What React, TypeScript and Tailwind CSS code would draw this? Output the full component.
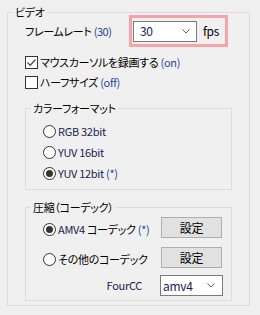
import React from 'react';

const Check = ({ checked }: { checked?: boolean }) => (
  <span className="flex h-[13px] w-[13px] shrink-0 items-center justify-center border border-[#333333] bg-white">
    {checked && (
      <svg width="11" height="11" viewBox="0 0 11 11">
        <path d="M1.5 5.5 L4.2 8.2 L9.5 2.5" fill="none" stroke="#505050" strokeWidth="1.3" />
      </svg>
    )}
  </span>
);

const Radio = ({ checked }: { checked?: boolean }) => (
  <span className="flex h-[13px] w-[13px] shrink-0 items-center justify-center rounded-full border border-[#333333] bg-white">
    {checked && <span className="h-[7px] w-[7px] rounded-full bg-[#333333]" />}
  </span>
);

const Chevron = () => (
  <svg width="8" height="5" viewBox="0 0 8 5" className="shrink-0">
    <path d="M0.5 0.5 L4 4 L7.5 0.5" fill="none" stroke="#606060" strokeWidth="1" />
  </svg>
);

// Windows-style group box: caption sits on the top border line
const Group = ({ title, children }: { title: string; children: React.ReactNode }) => (
  <section>
    <div className="flex h-[15px]">
      <div className="mt-[7px] w-[6px] shrink-0 border-l border-t border-[#dcdcdc]" />
      <span className="px-[2px] leading-[15px] whitespace-nowrap">{title}</span>
      <div className="mt-[7px] flex-1 border-r border-t border-[#dcdcdc]" />
    </div>
    <div className="border-x border-b border-[#dcdcdc]">{children}</div>
  </section>
);

const Option = ({ checked, children }: { checked?: boolean; children: React.ReactNode }) => (
  <div className="flex h-[21px] items-center gap-[2px] whitespace-nowrap">
    <Radio checked={checked} />
    <span>{children}</span>
  </div>
);

const Button = ({ label }: { label: string }) => (
  <button className="flex h-[21px] w-[61px] items-center justify-center border border-[#adadad] bg-[#e1e1e1] text-[12px] text-black">
    {label}
  </button>
);

export default function App() {
  const blue = 'text-[#24449a]';
  const navy = 'text-[#16224e]';
  return (
    <div className="h-[315px] w-[260px] bg-[#f0f0f0] px-[7px] pt-[5px] font-['Noto_Sans_CJK_JP',sans-serif] text-[11px] tracking-[-0.3px] text-black [font-feature-settings:'palt']">
      <div className="w-[243px]">
        <Group title="ビデオ">
          <div className="px-[17px] pb-[4px]">
            <div className="-mt-[5px] flex items-center">
              <span className="w-[104px] whitespace-nowrap">
                フレームレート <span className={`tracking-[-0.5px] ${blue}`}>(30)</span>
              </span>
              <div className="flex h-[32px] w-[99px] items-center border-[3px] border-[#f5a3a8] pl-[1px]">
                <div className="flex h-[21px] w-[64px] items-center justify-between border border-[#7a7a7a] bg-white pl-[6px] pr-[6px]">
                  <span className={`text-[12px] ${navy}`}>30</span>
                  <Chevron />
                </div>
                <span className="ml-[6px] text-[12px]">fps</span>
              </div>
            </div>

            <div className="mt-[5px] flex h-[20px] items-center gap-[2px] whitespace-nowrap">
              <Check checked />
              <span>
                マウスカーソルを録画する <span className={blue}>(on)</span>
              </span>
            </div>
            <div className="flex h-[20px] items-center gap-[2px] whitespace-nowrap">
              <Check />
              <span>
                ハーフサイズ <span className={blue}>(off)</span>
              </span>
            </div>

            <div className="mt-[9px]">
              <Group title="カラーフォーマット">
                <div className="pl-[17px] pt-[5px] pb-[5px]">
                  <Option>
                    <span className={navy}>RGB 32bit</span>
                  </Option>
                  <Option>
                    <span className={navy}>YUV 16bit</span>
                  </Option>
                  <Option checked>
                    <span className={navy}>YUV 12bit</span> <span className={blue}>(*)</span>
                  </Option>
                </div>
              </Group>
            </div>

            <div className="mt-[10px]">
              <Group title="圧縮（コーデック）">
                <div className="pl-[17px] pt-[2px] pb-[4px]">
                  <div className="flex items-center">
                    <div className="mt-[4px] flex w-[118px] items-center gap-[2px] whitespace-nowrap">
                      <Radio checked />
                      <span>
                        <span className={navy}>AMV4</span> コーデック <span className={blue}>(*)</span>
                      </span>
                    </div>
                    <Button label="設定" />
                  </div>
                  <div className="mt-[9px] flex items-center">
                    <div className="mt-[3px] flex w-[118px] items-center gap-[2px] whitespace-nowrap">
                      <Radio />
                      <span>その他のコーデック</span>
                    </div>
                    <Button label="設定" />
                  </div>
                  <div className="mt-[7px] flex items-center">
                    <span className={`w-[99px] text-right ${navy}`}>FourCC</span>
                    <div className="ml-[18px] flex h-[21px] w-[63px] items-center justify-between border border-[#7a7a7a] bg-white pl-[2px] pr-[7px]">
                      <span className={`text-[12px] ${navy}`}>amv4</span>
                      <Chevron />
                    </div>
                  </div>
                </div>
              </Group>
            </div>
          </div>
        </Group>
      </div>
    </div>
  );
}
